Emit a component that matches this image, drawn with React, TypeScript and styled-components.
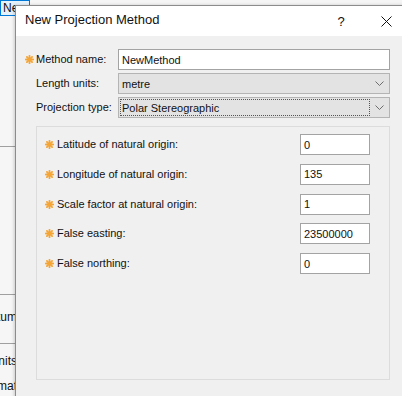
import React from "react";
import styled, { createGlobalStyle } from "styled-components";

const GlobalStyle = createGlobalStyle`
  html, body {
    margin: 0;
    padding: 0;
    overflow: hidden;
    background: #f5f5f5;
  }
`;

const Desktop = styled.div`
  position: relative;
  width: 402px;
  height: 396px;
  overflow: hidden;
  font-family: 'Liberation Sans', Arial, sans-serif;
  font-size: 11px;
  color: #111;
`;

/* window behind the dialog, only a thin strip of it shows */
const BackWindow = styled.div`
  display: flex;
  flex-direction: column;
  width: 60px;
  height: 396px;
  background: #f6f6f6;
`;

const BackBar = styled.div`
  height: 20px;
  display: flex;
  align-items: flex-start;
  box-sizing: border-box;
`;

const BackButton = styled.div`
  height: 16px;
  width: 30px;
  box-sizing: border-box;
  border: 1px solid #0078d7;
  background: #e5f1fb;
  padding-left: 2px;
  font-size: 12px;
  line-height: 14px;
`;

const BackSection = styled.div<{ $h: number; $line?: boolean }>`
  height: ${(p) => p.$h}px;
  flex: none;
  border-bottom: ${(p) => (p.$line ? "1px solid #a0a0a0" : "none")};
  display: flex;
  flex-direction: column;
  justify-content: flex-start;
`;

const BackLabel = styled.div<{ $top: number }>`
  width: 17px;
  margin-top: ${(p) => p.$top}px;
  display: flex;
  justify-content: flex-end;
  overflow: hidden;
  white-space: nowrap;
  font-size: 12px;
  line-height: 14px;
`;

const Dialog = styled.div`
  position: absolute;
  left: 15px;
  top: 5px;
  width: 430px;
  height: 420px;
  border: 1px solid #8c8c8c;
  background: #f0f0f0;
  box-shadow: -1px 0 3px rgba(0, 0, 0, 0.18);
  display: flex;
  flex-direction: column;
`;

const TitleBar = styled.div`
  height: 30px;
  flex: none;
  background: #fff;
  display: flex;
  align-items: center;
  padding-left: 9px;
`;

const Title = styled.div`
  flex: 1;
  font-size: 13px;
  line-height: 16px;
  padding-bottom: 2px;
`;

const TitleButton = styled.div<{ $w: number }>`
  width: ${(p) => p.$w}px;
  height: 30px;
  display: flex;
  align-items: center;
  justify-content: center;
  font-size: 13px;
`;

const Body = styled.div`
  padding: 13px 0 0 9px;
  display: flex;
  flex-direction: column;
`;

const HeadGrid = styled.div`
  display: grid;
  grid-template-columns: 11px 82px 272px;
  grid-auto-rows: 21px;
  row-gap: 3px;
  align-items: center;
`;

const Star = styled.span`
  display: flex;
  align-items: center;
  height: 100%;
`;

const Label = styled.div`
  white-space: nowrap;
  padding-bottom: 1px;
`;

const TextBox = styled.div<{ $w?: number }>`
  box-sizing: border-box;
  width: ${(p) => (p.$w ? `${p.$w}px` : "100%")};
  height: 21px;
  background: #fff;
  border: 1px solid #a3a3a3;
  padding-left: 3px;
  display: flex;
  align-items: center;
  white-space: nowrap;
`;

const Combo = styled.div`
  box-sizing: border-box;
  width: 100%;
  height: 21px;
  background: #e3e3e3;
  border: 1px solid #b4b4b4;
  display: flex;
  align-items: center;
  padding: 1px 0 1px 1px;
`;

const ComboText = styled.div<{ $focus?: boolean }>`
  flex: 1;
  height: 100%;
  box-sizing: border-box;
  border: 1px dotted ${(p) => (p.$focus ? "#555" : "transparent")};
  padding-left: 1px;
  display: flex;
  align-items: center;
`;

const Chevron = styled.div`
  width: 19px;
  display: flex;
  justify-content: center;
  align-items: center;
`;

const Panel = styled.div`
  margin: 8px 0 0 11px;
  width: 354px;
  height: 254px;
  box-sizing: border-box;
  border: 1px solid #dcdcdc;
  padding: 7px 19px 0 8px;
`;

const ParamGrid = styled.div`
  display: grid;
  grid-template-columns: 12px 1fr 70px;
  grid-auto-rows: 21px;
  row-gap: 8.75px;
  align-items: center;
`;

const Asterisk = () => (
  <svg width="9" height="9" viewBox="0 0 9 9">
    <g stroke="#f4a535" strokeWidth="1.8" strokeLinecap="round">
      <line x1="4.5" y1="0.8" x2="4.5" y2="8.2" />
      <line x1="0.8" y1="4.5" x2="8.2" y2="4.5" />
      <line x1="1.9" y1="1.9" x2="7.1" y2="7.1" />
      <line x1="7.1" y1="1.9" x2="1.9" y2="7.1" />
    </g>
  </svg>
);

const ChevronIcon = () => (
  <svg width="9" height="5" viewBox="0 0 9 5">
    <polyline points="0.5,0.5 4.5,4.5 8.5,0.5" fill="none" stroke="#6d6d6d" strokeWidth="1" />
  </svg>
);

const CloseIcon = () => (
  <svg width="11" height="11" viewBox="0 0 11 11">
    <g stroke="#111" strokeWidth="1">
      <line x1="0.5" y1="0.5" x2="10.5" y2="10.5" />
      <line x1="10.5" y1="0.5" x2="0.5" y2="10.5" />
    </g>
  </svg>
);

const params = [
  { label: "Latitude of natural origin:", value: "0" },
  { label: "Longitude of natural origin:", value: "135" },
  { label: "Scale factor at natural origin:", value: "1" },
  { label: "False easting:", value: "23500000" },
  { label: "False northing:", value: "0" },
];

export default function App() {
  return (
    <Desktop>
      <GlobalStyle />
      <BackWindow>
        <BackBar>
          <BackButton>New</BackButton>
        </BackBar>
        <BackSection $h={127} $line />
        <BackSection $h={147} $line />
        <BackSection $h={48} $line>
          <BackLabel $top={15}>Datum</BackLabel>
        </BackSection>
        <BackSection $h={52}>
          <BackLabel $top={10}>Units</BackLabel>
          <BackLabel $top={11}>Format</BackLabel>
        </BackSection>
      </BackWindow>

      <Dialog>
        <TitleBar>
          <Title>New Projection Method</Title>
          <TitleButton $w={30}>?</TitleButton>
          <TitleButton $w={60}>
            <CloseIcon />
          </TitleButton>
          <TitleButton $w={30} />
        </TitleBar>

        <Body>
          <HeadGrid>
            <Star>
              <Asterisk />
            </Star>
            <Label>Method name:</Label>
            <TextBox>NewMethod</TextBox>

            <span />
            <Label>Length units:</Label>
            <Combo>
              <ComboText>metre</ComboText>
              <Chevron>
                <ChevronIcon />
              </Chevron>
            </Combo>

            <span />
            <Label>Projection type:</Label>
            <Combo>
              <ComboText $focus>Polar Stereographic</ComboText>
              <Chevron>
                <ChevronIcon />
              </Chevron>
            </Combo>
          </HeadGrid>

          <Panel>
            <ParamGrid>
              {params.map((p) => (
                <React.Fragment key={p.label}>
                  <Star>
                    <Asterisk />
                  </Star>
                  <Label>{p.label}</Label>
                  <TextBox $w={70}>{p.value}</TextBox>
                </React.Fragment>
              ))}
            </ParamGrid>
          </Panel>
        </Body>
      </Dialog>
    </Desktop>
  );
}
